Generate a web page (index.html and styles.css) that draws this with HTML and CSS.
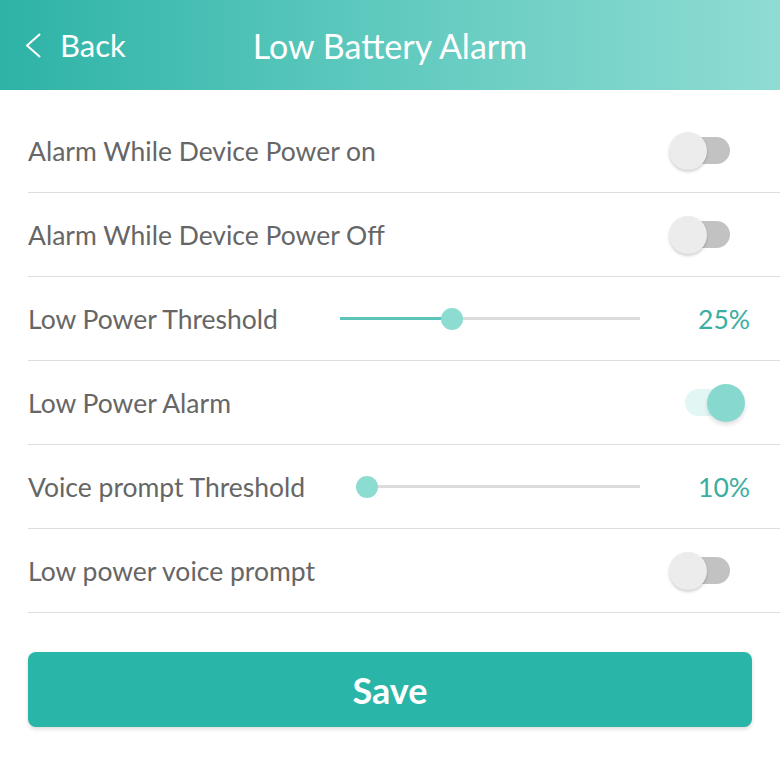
FILE: index.html
```html
<!DOCTYPE html>
<html lang="en">
<head>
  <meta charset="UTF-8">
  <meta name="viewport" content="width=device-width, initial-scale=1.0">
  <title>Low Battery Alarm</title>
  <link rel="stylesheet" href="styles.css">
</head>
<body>
  <header class="top-bar">
    <div class="back">
      <svg class="back-icon" width="16" height="25" viewBox="0 0 16 25">
        <path d="M14.5 1.5 L2 12.5 L14.5 23.5" fill="none" stroke="#fff" stroke-width="2" stroke-linecap="round" stroke-linejoin="round"/>
      </svg>
      <span>Back</span>
    </div>
    <div class="page-title">Low Battery Alarm</div>
  </header>

  <div class="settings">
    <div class="row">
      <div class="label">Alarm While Device Power on</div>
      <div class="switch"><span class="knob"></span></div>
    </div>

    <div class="row">
      <div class="label">Alarm While Device Power Off</div>
      <div class="switch"><span class="knob"></span></div>
    </div>

    <div class="row">
      <div class="label">Low Power Threshold</div>
      <div class="slider">
        <div class="slider-fill" style="width: 37.5%"></div>
        <span class="slider-thumb" style="left: 37.5%"></span>
      </div>
      <div class="value">25%</div>
    </div>

    <div class="row">
      <div class="label">Low Power Alarm</div>
      <div class="switch on"><span class="knob"></span></div>
    </div>

    <div class="row">
      <div class="label">Voice prompt Threshold</div>
      <div class="slider">
        <div class="slider-fill" style="width: 0%"></div>
        <span class="slider-thumb" style="left: 0%"></span>
      </div>
      <div class="value">10%</div>
    </div>

    <div class="row">
      <div class="label">Low power voice prompt</div>
      <div class="switch"><span class="knob"></span></div>
    </div>
  </div>

  <div class="actions">
    <button class="save-button">Save</button>
  </div>
</body>
</html>
```

FILE: styles.css
```css
body {
  margin: 0;
  padding: 0;
  font-family: Lato, 'Open Sans', sans-serif;
  background: #fff;
  color: #666;
  width: 780px;
  height: 765px;
  overflow: hidden;
}

.top-bar {
  height: 90px;
  background: linear-gradient(90deg, #2db3a6 0%, #5cc8bd 45%, #8fdcd3 100%);
  color: #fff;
  display: flex;
  align-items: center;
  position: relative;
}

.back {
  display: flex;
  align-items: center;
  padding-left: 25px;
  font-size: 31px;
}

.back-icon {
  margin-right: 19px;
  flex-shrink: 0;
}

.page-title {
  position: absolute;
  left: 0;
  right: 0;
  text-align: center;
  font-size: 34px;
  pointer-events: none;
}

.settings {
  padding-top: 19px;
  margin-left: 28px;
}

.row {
  height: 83px;
  border-bottom: 1px solid #dedede;
  display: flex;
  align-items: center;
  padding-right: 30px;
  font-size: 26.5px;
}

.label {
  white-space: nowrap;
}

.switch {
  margin-left: auto;
  margin-right: 20px;
  width: 45px;
  height: 27px;
  border-radius: 14px;
  background: #c2c2c2;
  position: relative;
}

.switch .knob {
  position: absolute;
  top: 50%;
  left: 3px;
  width: 38px;
  height: 38px;
  margin: -19px 0 0 -19px;
  border-radius: 50%;
  background: #ececec;
  box-shadow: 0 2px 3px rgba(0, 0, 0, 0.18);
}

.switch.on {
  background: #e2f6f3;
}

.switch.on .knob {
  left: 41px;
  background: #87d9cf;
  box-shadow: 0 3px 4px rgba(0, 0, 0, 0.12);
}

.slider {
  flex: 1;
  margin-left: 62px;
  height: 3px;
  background: #dcdcdc;
  position: relative;
}

.slider-fill {
  height: 100%;
  background: #5ec4b9;
}

.slider-thumb {
  position: absolute;
  top: 50%;
  width: 22px;
  height: 22px;
  margin: -11px 0 0 -11px;
  border-radius: 50%;
  background: #8ddcd2;
}

.value {
  width: 110px;
  text-align: right;
  color: #3aaea2;
}

.actions {
  padding: 39px 28px 0;
}

.save-button {
  width: 100%;
  height: 75px;
  border: none;
  border-radius: 8px;
  background: #29b5a8;
  color: #fff;
  font-family: Lato, sans-serif;
  font-size: 36px;
  font-weight: bold;
  box-shadow: 0 2px 4px rgba(0, 0, 0, 0.15);
  cursor: pointer;
}
```
